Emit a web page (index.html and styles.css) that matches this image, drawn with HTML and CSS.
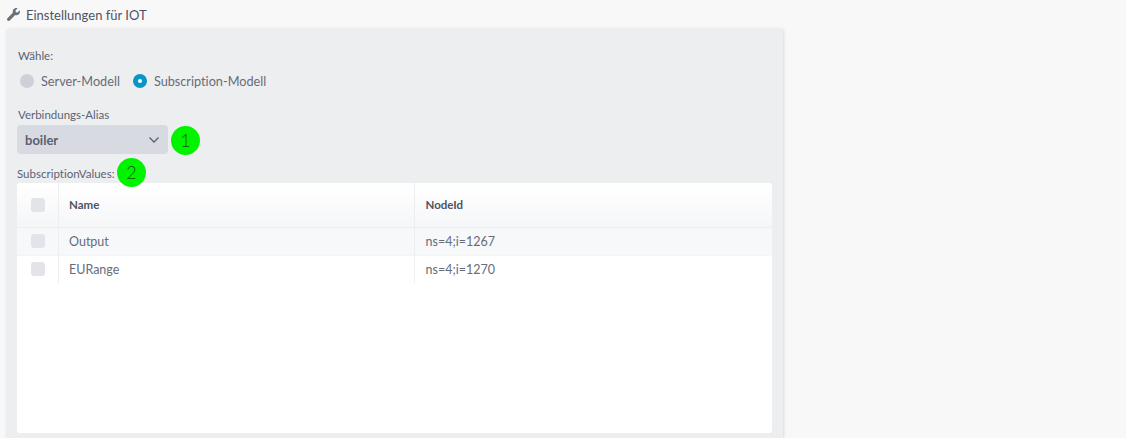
FILE: index.html
```html
<!DOCTYPE html>
<html lang="de">
<head>
<meta charset="utf-8">
<title>Einstellungen für IOT</title>
<link rel="stylesheet" href="styles.css">
</head>
<body>
<main class="page">
  <h1 class="title">
    <svg class="wrench" viewBox="0 0 512 512" aria-hidden="true"><path d="M507.7 109.1c-2.2-9-13.5-12.1-20.1-5.5l-74.4 74.4-67.9-11.3-11.3-67.9 74.4-74.4c6.6-6.6 3.4-17.9-5.700-20.200-47.400-11.700-99.500.9-136.500 37.900-39.600 39.600-51.400 96.700-35.900 146.800L18.700 402.900c-25 25-25 65.500 0 90.500s65.500 25 90.500 0l213.200-213.200c50.100 15.800 107.500 3.900 147.400-35.900 37.100-37.100 49.700-89.300 37.900-135.200z"/></svg>
    <span>Einstellungen für IOT</span>
  </h1>
  <section class="card">
    <div class="field-label choose">Wähle:</div>
    <div class="radios">
      <label class="radio"><span class="dot"></span>Server-Modell</label>
      <label class="radio"><span class="dot on"></span>Subscription-Modell</label>
    </div>
    <div class="field-label alias">Verbindungs-Alias</div>
    <div class="select-row">
      <div class="select">
        <span>boiler</span>
        <svg class="chev" viewBox="0 0 12 8" aria-hidden="true"><path d="M1.500 1.500 6 6l4.500-4.500"/></svg>
      </div>
      <span class="badge badge-one">1</span>
    </div>
    <div class="field-label values">SubscriptionValues:<span class="badge badge-two">2</span></div>
    <div class="table-wrap">
      <table class="grid">
        <colgroup><col class="c1"><col class="c2"><col></colgroup>
        <thead>
          <tr><th><span class="check"></span></th><th>Name</th><th>NodeId</th></tr>
        </thead>
        <tbody>
          <tr class="alt"><td><span class="check"></span></td><td>Output</td><td>ns=4;i=1267</td></tr>
          <tr><td><span class="check"></span></td><td>EURange</td><td>ns=4;i=1270</td></tr>
        </tbody>
      </table>
    </div>
  </section>
</main>
</body>
</html>
```
FILE: styles.css
```css
* { box-sizing: border-box; }
html, body { margin: 0; height: 100%; overflow: hidden; }
body {
  background: #f8f8f8;
  color: #5c6270;
  font-family: Lato, "Noto Sans", sans-serif;
  font-size: 13px;
  font-variant-ligatures: none;
}
.page {
  display: flex;
  flex-direction: column;
  height: 100vh;
  width: 777px;
  margin-left: 6px;
}
.title {
  display: flex;
  align-items: center;
  gap: 6px;
  flex: none;
  height: 29px;
  margin: 0;
  padding: 0 0 0 1px;
  font-size: 13px;
  font-weight: 400;
  color: #4e5462;
}
.wrench { width: 13px; height: 13px; fill: #6a6f7a; }
.card {
  flex: 1;
  padding: 19px 11px 0;
  background: #edeef0;
  border-radius: 4px 4px 0 0;
  box-shadow: 1px 0 3px rgba(0, 0, 0, .12);
}
.field-label { font-size: 11.500px; line-height: 16px; color: #5c6270; }
.choose { margin-left: 1px; }
.radios { display: flex; gap: 13px; margin: 8px 0 0 3px; height: 18px; }
.radio { display: flex; align-items: center; gap: 7px; font-size: 12.700px; color: #666c79; }
.dot {
  width: 14px;
  height: 14px;
  border-radius: 50%;
  background: #cdd1d7;
}
.dot.on { background: #fff; border: 5px solid #0a96c4; }
.alias { margin: 17px 0 0 1px; }
.select-row { display: flex; align-items: center; margin-top: 2px; position: relative; }
.select {
  display: flex;
  align-items: center;
  justify-content: space-between;
  width: 151px;
  height: 29px;
  padding: 0 8px;
  border-radius: 4px;
  background: #d7dbe1;
  font-size: 13px;
  font-weight: 700;
  color: #5a606e;
}
.chev { width: 12px; height: 8px; fill: none; stroke: #596070; stroke-width: 1.300; }
.badge {
  position: absolute;
  width: 29px;
  height: 29px;
  border-radius: 50%;
  background: #00f400;
  color: #0e5a0e;
  font-size: 18px;
  font-weight: 300;
  line-height: 29px;
  text-align: center;
}
.badge-one { left: 154px; top: 1px; }
.badge-two { left: 100px; top: -7px; }
.values { position: relative; margin: 11px 0 0; height: 18px; line-height: 18px; white-space: nowrap; }
.table-wrap {
  height: 250px;
  background: #fff;
  border-radius: 3px;
  overflow: hidden;
}
.grid { width: 100%; border-collapse: collapse; table-layout: fixed; }
.c1 { width: 41px; }
.c2 { width: 356px; }
.grid th {
  height: 44px;
  padding: 0 0 0 11px;
  text-align: left;
  font-size: 11.500px;
  font-weight: 700;
  color: #4e5462;
  background: linear-gradient(#ffffff, #f5f6f8);
  border-bottom: 1px solid #edeef1;
}
.grid td {
  height: 28px;
  padding: 0 0 0 11px;
  font-size: 12.500px;
  color: #666c79;
  border-bottom: 1px solid #f3f4f6;
}
.grid tbody tr:last-child td { border-bottom: 0; }
.grid th:nth-child(-n+2), .grid td:nth-child(-n+2) { border-right: 1px solid #edeef1; }
.grid th:first-child, .grid td:first-child { padding-left: 14px; }
.grid th:nth-child(2), .grid td:nth-child(2) { padding-left: 10.500px; }
.alt td { background: #f7f8fa; }
.check {
  display: block;
  width: 14px;
  height: 14px;
  border-radius: 3px;
  background: #e2e4e9;
}
```
